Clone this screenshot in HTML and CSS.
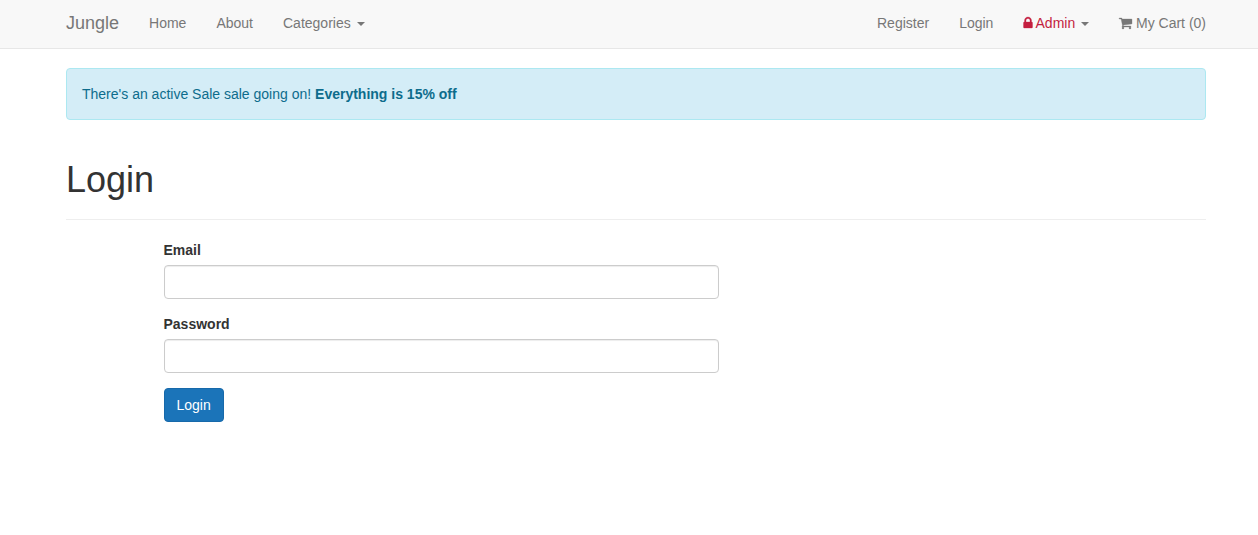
FILE: index.html
```html
<!DOCTYPE html>
<html lang="en">
<head>
<meta charset="utf-8">
<title>Jungle</title>
<link rel="stylesheet" href="styles.css">
</head>
<body>
<nav class="navbar">
  <div class="container navbar-inner">
    <a class="brand">Jungle</a>
    <ul class="nav">
      <li><a>Home</a></li>
      <li><a>About</a></li>
      <li><a>Categories <span class="caret"></span></a></li>
    </ul>
    <ul class="nav nav-right">
      <li><a>Register</a></li>
      <li><a>Login</a></li>
      <li><a><span class="admin"><svg class="icon icon-lock" width="9" height="14" viewBox="0 0 1152 1792"><path d="M320 768h512v-192q0-106-75-181t-181-75-181 75-75 181v192zm832 96v576q0 40-28 68t-68 28h-960q-40 0-68-28t-28-68v-576q0-40 28-68t68-28h32v-192q0-184 132-316t316-132 316 132 132 316v192h32q40 0 68 28t28 68z"/></svg> Admin</span> <span class="caret"></span></a></li>
      <li><a><svg class="icon icon-cart" width="13" height="14" viewBox="0 0 1664 1792"><path d="M640 1408q0 52-38 90t-90 38-90-38-38-90 38-90 90-38 90 38 38 90zm896 0q0 52-38 90t-90 38-90-38-38-90 38-90 90-38 90 38 38 90zm128-1088v512q0 24-16.500 42.500t-40.500 21.500l-1044 122q13 60 13 70 0 16-24 64h920q26 0 45 19t19 45-19 45-45 19h-1024q-26 0-45-19t-19-45q0-11 8-31.500t16-36 21.500-40 15.500-29.500l-177-823h-204q-26 0-45-19t-19-45 19-45 45-19h256q16 0 28.500 6.500t19.500 15.500 13 24.500 8 26 5.500 29.500 4.500 26h1201q26 0 45 19t19 45z"/></svg> My Cart (0)</a></li>
    </ul>
  </div>
</nav>
<main class="container">
  <div class="alert">There's an active Sale sale going on! <strong>Everything is 15% off</strong></div>
  <header class="page-header"><h1>Login</h1></header>
  <form class="login-form">
    <div class="form-group">
      <label for="email">Email</label>
      <input class="form-control" type="text" id="email">
    </div>
    <div class="form-group">
      <label for="password">Password</label>
      <input class="form-control" type="password" id="password">
    </div>
    <button class="btn" type="button">Login</button>
  </form>
</main>
</body>
</html>
```
FILE: styles.css
```css
* { box-sizing: border-box; }
body {
  margin: 0;
  font-family: "Liberation Sans", Arial, sans-serif;
  font-size: 14px;
  line-height: 20px;
  color: #333;
  background: #fff;
}
.container {
  width: 1140px;
  margin-left: 66px;
}
.navbar {
  height: 49px;
  background: #f8f8f8;
  border-bottom: 1px solid #e7e7e7;
}
.navbar-inner {
  display: flex;
  padding-top: 13px;
  color: #777;
}
.brand {
  font-size: 18px;
  padding-right: 15px;
}
.nav {
  display: flex;
  margin: 0;
  padding: 0;
  list-style: none;
}
.nav a {
  display: block;
  padding: 0 15px;
}
.nav-right {
  margin-left: auto;
  margin-right: -15px;
}
.caret {
  display: inline-block;
  margin-left: 2px;
  vertical-align: middle;
  border-top: 4px solid;
  border-left: 4px solid transparent;
  border-right: 4px solid transparent;
}
.icon {
  display: inline-block;
  vertical-align: -2px;
  fill: currentColor;
  stroke: currentColor;
  stroke-width: 40px;
  overflow: visible;
}
.icon-lock { transform: translateX(.5px); }
.icon-cart { transform: translateY(1px); }
.admin { color: #c41e3f; }
.alert {
  margin-top: 19px;
  padding: 15px;
  color: #0d6c8c;
  background: #d4edf7;
  border: 1px solid #ace8f1;
  border-radius: 4px;
}
.page-header {
  margin: 40px 0 20px;
  padding-bottom: 9px;
  border-bottom: 1px solid #eee;
}
h1 {
  margin: 0 0 10px;
  font-size: 36px;
  font-weight: 500;
  line-height: 1.1;
}
.login-form {
  width: 555px;
  margin-left: 97.5px;
}
.form-group { margin-bottom: 15px; }
label {
  display: block;
  margin-bottom: 5px;
  font-weight: bold;
}
.form-control {
  display: block;
  width: 100%;
  height: 34px;
  padding: 6px 12px;
  font: inherit;
  color: #555;
  background: #fff;
  border: 1px solid #ccc;
  border-radius: 4px;
  box-shadow: inset 0 1px 1px rgba(0, 0, 0, .075);
}
.btn {
  display: block;
  padding: 6px 12px;
  font: inherit;
  color: #fff;
  background: #1b74b9;
  border: 1px solid #1769aa;
  border-radius: 4px;
}
```
